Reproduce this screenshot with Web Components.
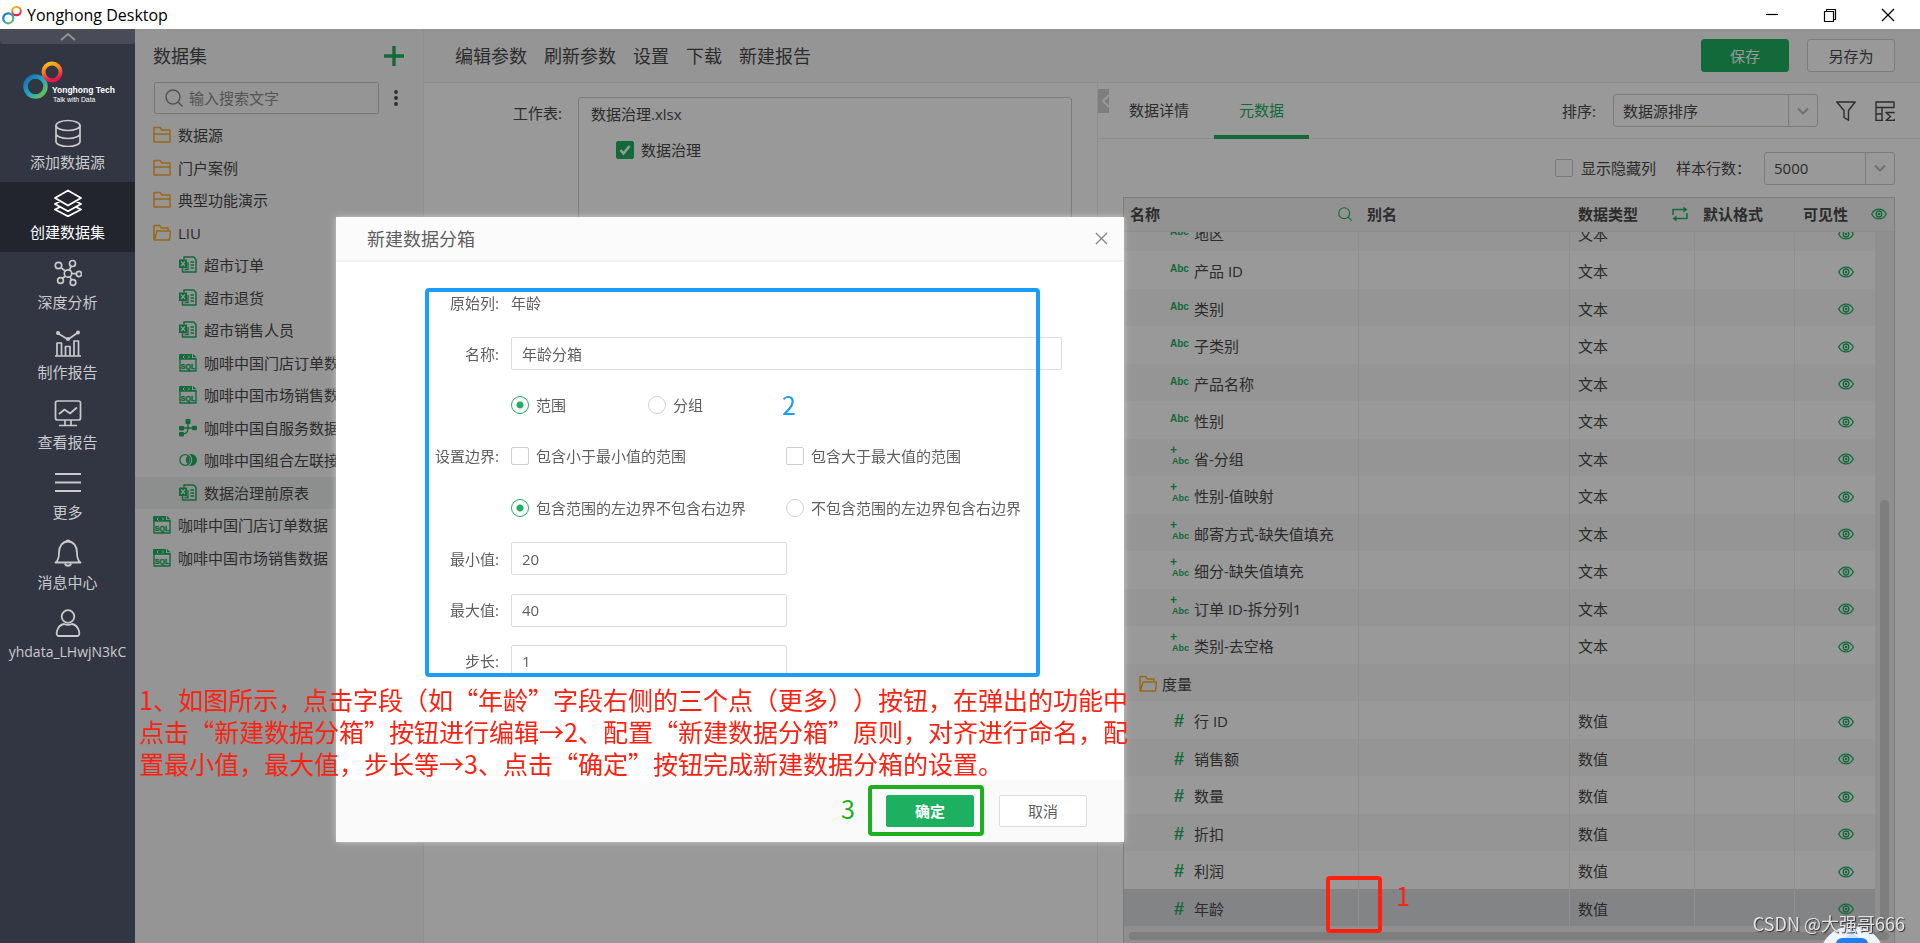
<!DOCTYPE html>
<html lang="zh-CN">
<head>
<meta charset="utf-8">
<title>Yonghong Desktop</title>
<style>
  html, body { margin: 0; height: 100%; overflow: hidden; }
  body {
    --green: #1eb061; --line: #eeeeee; --edge: #cfcfcf; --panel: #f8f8f8; --blue: #1b9cff; --red: #ff2010; --ok: #1cb01c;
    font: 15px/20px "Open Sans", "Noto Sans CJK SC", sans-serif; color: #4a4a4a;
  }
  yh-app { isolation: isolate; }
  call-box, call-num, call-text, page-mark, help-bot { position: absolute; }
  #box-form { left: 425px; top: 288px; width: 615px; height: 389px; color: var(--blue); }
  #box-ok { left: 868px; top: 785px; width: 116px; height: 51px; color: var(--ok); }
  #box-cell { left: 1326px; top: 876px; width: 56px; height: 57px; color: var(--red); }
  #num-cell { left: 1396px; top: 879px; color: var(--red); }
  #num-form { left: 782px; top: 388px; color: var(--blue); }
  #num-ok { left: 841px; top: 792px; color: var(--ok); }
  call-text { left: 139px; top: 683px; color: var(--red); }
  page-mark { right: 15px; bottom: 7px; }
  help-bot { right: 35px; bottom: 0; }
</style>
</head>
<body>
<yh-app></yh-app>
<call-box id="box-form"></call-box>
<call-box id="box-ok"></call-box>
<call-box id="box-cell"></call-box>
<call-num id="num-form">2</call-num>
<call-num id="num-ok">3</call-num>
<call-num id="num-cell">1</call-num>
<call-text>1、如图所示，点击字段（如“年龄”字段右侧的三个点（更多））按钮，在弹出的功能中<br>点击“新建数据分箱”按钮进行编辑→2、配置“新建数据分箱”原则，对齐进行命名，配<br>置最小值，最大值，步长等→3、点击“确定”按钮完成新建数据分箱的设置。</call-text>
<help-bot></help-bot>
<page-mark>CSDN @大强哥666</page-mark>

<script>
const define = (name, css, html, setup) => customElements.define(name, class extends HTMLElement {
  connectedCallback() {
    if (this.shadowRoot) return;
    const root = this.attachShadow({ mode: 'open' });
    root.innerHTML = `<style>*{box-sizing:border-box}button,input,select{font:inherit;color:inherit}${css}</style>` +
      (typeof html === 'function' ? html(this) : html);
    if (setup) setup(root, this);
  }
});

/* ---------- icons: [viewBox size, markup] ---------- */
const S = (w, body) => `<g fill="none" stroke="currentColor" stroke-width="${w}" stroke-linejoin="round">${body}</g>`;
const ICONS = {
  db: [28, S(1.7, '<ellipse cx="14" cy="6.5" rx="12" ry="5"/><path d="M2 6.5v16c0 2.8 5.4 5 12 5s12-2.2 12-5v-16M2 14.5c0 2.8 5.4 5 12 5s12-2.2 12-5"/>')],
  layers: [28, S(1.8, '<path d="M14 1.5 27 9 14 16.5 1 9zM5.5 12.5 1 15l13 7.3L27 15l-4.5-2.5M5.5 18.3 1 20.5 14 27.3l13-6.8-4.5-2.2"/>')],
  net: [28, S(1.7, '<circle cx="14" cy="14.5" r="3.7"/><circle cx="4.5" cy="6.5" r="3.2"/><circle cx="18.5" cy="4.5" r="3"/><circle cx="25" cy="15" r="2.6"/><circle cx="19" cy="23.5" r="2.8"/><circle cx="6.5" cy="21.5" r="2.9"/><path d="M11.2 12 7 8.6M15.3 11l2-3.8M17.7 14.6h4.7M15.8 17.7l1.8 3.5M11.2 16.9l-2.5 2.4"/>')],
  chart: [28, S(1.7, '<path d="M1 27h26M3 27V14h4.5v13M11.5 27V17.5H16V27M20 27V12h4.5v15M3.5 4 14 10.5 24 3.5"/>') + '<g fill="currentColor"><circle cx="4" cy="4" r="2"/><circle cx="14" cy="10" r="2"/><circle cx="24" cy="3.5" r="2"/></g>'],
  monitor: [28, S(1.7, '<rect x="1.5" y="2" width="25" height="19" rx="2"/><path d="m5 15 5.500-4.500 5.500 4 7-6M11 21v5M17 21v5M5 26.500h18"/>')],
  menu: [28, S(1.8, '<path d="M1 5h26M1 13.5h26M1 22h26"/>')],
  bell: [28, S(1.8, '<path d="M1.500 23.500c3-2 3.500-5 3.500-10C5 7 8.500 2.500 14 2.500S23 7 23 13.500c0 5 .5 8 3.500 10z"/><path d="M12 2.500c.5-1.500 3.500-1.500 4 0M11 24.500c.5 3 5.500 3 6 0"/>')],
  user: [28, S(1.8, '<circle cx="14" cy="7.5" r="6.3"/><path d="M4.500 27C1 27 2.500 16.500 10 15c2.500 1 5.500 1 8 0 7.500 1.500 9 12 5.500 12z"/>')],
  up: [16, S(1.8, '<path d="m1 11 7-6 7 6"/>')],
  left: [16, S(2, '<path d="M11 2 5 8l6 6"/>')],
  down: [12, S(2, '<path d="m1 3.5 5 5 5-5"/>')],
  close: [14, S(1.4, '<path d="m1 1 12 12M13 1 1 13"/>')],
  winmin: [14, S(1.2, '<path d="M1 6.5h12"/>')],
  winmax: [14, S(1.2, '<path d="M1.500 3.500h9v10h-9zM3.500 3.500v-2h9v10h-2"/>')],
  plus: [20, '<path fill="currentColor" d="M8.300 0h3.400v8.300H20v3.400h-8.300V20H8.300v-8.300H0V8.300h8.300z"/>'],
  dots: [16, '<g fill="currentColor"><circle cx="8" cy="2" r="1.9"/><circle cx="8" cy="8" r="1.9"/><circle cx="8" cy="14" r="1.9"/></g>'],
  search: [18, S(1.4, '<circle cx="8" cy="8" r="7"/><path d="m13 13 4.5 4.5"/>')],
  folder: [18, S(1.5, '<path d="M1 16V1.5h6L9 4h8v12zM1 8h16"/>')],
  open: [18, S(1.5, '<path d="M1 16V1.5h5.500L8.500 4H15v3M1.500 16 4 7h13.500l-1 9z"/>')],
  xls: [18, S(1.5, '<path d="M5 3.500V1h9.800L17 3.500V16H3.500v-4"/>') + '<path fill="currentColor" d="M0 3.500h8v8.500H0z"/><path d="m2 5.500 4 4.500M6 5.500 2 10" stroke="#f8f8f8" stroke-width="1.2"/><path d="M9 6v7.500H5.500M11.500 6H15M11.500 9H15M11.500 12H15" fill="none" stroke="currentColor" stroke-width="1.3"/>'],
  sql: [18, S(1.4, '<path d="M1 1v16h16V5"/>') + '<path fill="currentColor" d="M.3 0H13v4h4.700v1.800H.3z"/><path fill="currentColor" d="m14 0 3.700 3.200H14z"/><path d="M5.500 1.500 4 3l1.500 1.500M9 1.500 10.500 3 9 4.500" fill="none" stroke="#f8f8f8"/><text x="9" y="14.500" text-anchor="middle" font-family="Liberation Sans" font-weight="700" font-size="7" fill="currentColor" stroke="currentColor" stroke-width=".4">SQL</text>'],
  flow: [18, S(1.3, '<path d="M3 9h12M9 4v6c0 3-2 5-6 5"/>') + '<g fill="currentColor"><rect x="6.5" y="0" width="5" height="5" rx="1"/><rect x="0" y="7" width="5" height="4.5" rx="1"/><rect x="13" y="6.7" width="5" height="4.5" rx="1"/><rect x="0" y="13" width="5" height="4.5" rx="1"/></g>'],
  join: [18, S(1.3, '<circle cx="6.2" cy="9" r="5.4"/>') + '<path fill="currentColor" d="M12 3a6 6 0 1 1 0 12 6 6 0 0 1-1.800-.3 7 7 0 0 0 0-11.400A6 6 0 0 1 12 3z"/><path fill="currentColor" d="M8.600 4.800a6 6 0 0 0 0 8.400 5.400 5.400 0 0 0 0-8.400z"/>'],
  filter: [20, S(1.4, '<path d="M.8 1h18.400L12.500 9.500V19.200L8 16.500v-7z"/>')],
  tsum: [20, S(1.4, '<path d="M19 7V1H1v18.500h7M1 6.500h18M7 6.500v13M1 13h6M19 12.500V11.500h-8l4.500 4-4.500 4H19.500v-1.500"/>')],
  swap: [16, S(1.5, '<path d="M1 9V3.500h11M15 7v5.500H4"/>') + '<path fill="currentColor" d="M11.500.5 15.500 3.500l-4 3zM4.500 9.500l-4 3 4 3z"/>'],
  eye: [16, S(1.3, '<path d="M.7 8C4 1.500 12 1.500 15.300 8 12 14.500 4 14.500.7 8z"/><ellipse cx="8" cy="8" rx="2.8" ry="3"/><circle cx="8" cy="8" r=".6"/>')],
  check: [16, '<path d="m3.500 8 3 3.500 6-7.500" fill="none" stroke="#fff" stroke-width="2.6"/>']
};
define('yh-icon', ':host{display:inline-flex;flex:none}svg{display:block}', el => {
  const [box, body] = ICONS[el.getAttribute('name')];
  const s = el.getAttribute('size') || box;
  return `<svg width="${s}" height="${s}" viewBox="0 0 ${box} ${box}" aria-hidden="true">${body}</svg>`;
});

const rings = `<defs>
  <linearGradient id="a" x1="0" y1="0" x2="1" y2="1"><stop offset="0" stop-color="#1668b8"/><stop offset=".5" stop-color="#1fa6c4"/><stop offset="1" stop-color="#7cc242"/></linearGradient>
  <linearGradient id="b" x1="0" y1="0" x2=".3" y2="1"><stop offset="0" stop-color="#fbc614"/><stop offset=".5" stop-color="#f37a25"/><stop offset="1" stop-color="#e5174d"/></linearGradient></defs>
  <circle cx="12.5" cy="25.5" r="10" fill="none" stroke="url(#a)" stroke-width="4.5"/>
  <circle cx="29" cy="11" r="8.5" fill="none" stroke="url(#b)" stroke-width="4"/>`;

define('yh-titlebar', `
  :host{display:flex;align-items:center;height:29px;background:#fff;color:#000;font-size:16px;padding-left:2px;flex:none}
  h1{font:inherit;margin:0 auto 0 5px;line-height:24px}
  button{width:58px;height:28px;border:0;background:none;display:grid;place-items:center;padding:0}
  nav{display:flex;padding-right:3px}`, `
  <svg width="20" height="20" viewBox="0 0 40 38">${rings}</svg><h1>Yonghong Desktop</h1>
  <nav><button aria-label="最小化"><yh-icon name="winmin"></yh-icon></button><button aria-label="还原"><yh-icon name="winmax"></yh-icon></button><button aria-label="关闭"><yh-icon name="close"></yh-icon></button></nav>`);

define('nav-item', `
  :host{display:block;height:70px;color:#c9cacd}
  :host([active]){background:#22252e;color:#fff}
  :host([icon=user]){font-size:14px}
  a{display:flex;flex-direction:column;align-items:center;gap:5px;padding-top:7px;color:inherit;text-decoration:none;white-space:nowrap}`,
  el => `<a href="#"><yh-icon name="${el.getAttribute('icon')}"></yh-icon><span><slot></slot></span></a>`);

define('yh-sidenav', `
  :host{display:block;width:135px;background:#323642;flex:none}
  button{display:grid;place-items:center;width:100%;height:15px;background:#494c57;border:0;border-radius:0 0 3px 3px;color:#92949b;padding:0}
  .logo{display:block;margin:17px 0 0 23px;height:51px}
  text{font-family:"Liberation Sans";fill:#fff}`, `
  <button aria-label="收起"><yh-icon name="up"></yh-icon></button>
  <svg class="logo" width="100" height="51">${rings}
    <text x="29" y="32" font-size="8.5" font-weight="700">Yonghong Tech</text><text x="30" y="41" font-size="6.8">Talk with Data</text></svg>
  <nav>
    <nav-item icon="db">添加数据源</nav-item><nav-item icon="layers" active>创建数据集</nav-item>
    <nav-item icon="net">深度分析</nav-item><nav-item icon="chart">制作报告</nav-item>
    <nav-item icon="monitor">查看报告</nav-item><nav-item icon="menu">更多</nav-item>
    <nav-item icon="bell">消息中心</nav-item><nav-item icon="user">yhdata_LHwjN3kC</nav-item>
  </nav>`);

define('tree-item', `
  :host{display:flex;align-items:center;gap:7px;padding-left:18px;white-space:nowrap;color:#4a4a4a}
  :host([deep]){padding-left:44px}
  :host([selected]){background:#e9eeeb}
  yh-icon{color:var(--green)} yh-icon[name=folder],yh-icon[name=open]{color:#ffad2b}
  a{color:inherit;text-decoration:none}`,
  el => `<yh-icon name="${el.getAttribute('icon')}"></yh-icon><a href="#"><slot></slot></a>`);

define('yh-datasets', `
  :host{display:block;width:289px;background:var(--panel);border-right:1px solid var(--line);flex:none;overflow:hidden}
  header{display:flex;align-items:center;justify-content:space-between;height:53px;padding:0 19px 0 18px}
  h2{font:inherit;font-size:18px;line-height:24px;margin:0}
  button{border:0;background:none;padding:0;display:flex;color:inherit} header button{color:var(--green)}
  .find{display:flex;align-items:center;gap:9px;padding-left:19px}
  label{display:flex;align-items:center;gap:6px;width:225px;height:32px;border:1px solid #c6c6c6;border-radius:2px;padding-left:10px;color:#888}
  input{flex:1;min-width:0;border:0;outline:0;background:none;padding:0} input::placeholder{color:#8c8c8c;opacity:1}
  .tree{display:grid;grid-auto-rows:1fr;height:455px;margin-top:5px}`, `
  <header><h2>数据集</h2><button aria-label="新建"><yh-icon name="plus"></yh-icon></button></header>
  <div class="find"><label><yh-icon name="search"></yh-icon><input aria-label="搜索" placeholder="输入搜索文字"></label><button aria-label="更多"><yh-icon name="dots"></yh-icon></button></div>
  <div class="tree">
    <tree-item icon="folder">数据源</tree-item><tree-item icon="folder">门户案例</tree-item><tree-item icon="folder">典型功能演示</tree-item><tree-item icon="open">LIU</tree-item>
    <tree-item deep icon="xls">超市订单</tree-item><tree-item deep icon="xls">超市退货</tree-item><tree-item deep icon="xls">超市销售人员</tree-item>
    <tree-item deep icon="sql">咖啡中国门店订单数据</tree-item><tree-item deep icon="sql">咖啡中国市场销售数据</tree-item>
    <tree-item deep icon="flow">咖啡中国自服务数据集</tree-item><tree-item deep icon="join">咖啡中国组合左联接</tree-item>
    <tree-item deep icon="xls" selected>数据治理前原表</tree-item>
    <tree-item icon="sql">咖啡中国门店订单数据</tree-item><tree-item icon="sql">咖啡中国市场销售数据</tree-item>
  </div>`);

define('yh-toolbar', `
  :host{display:flex;align-items:center;height:54px;background:var(--panel);border-bottom:1px solid var(--line);padding:0 25px 0 31px;gap:17px}
  a{font-size:18px;color:inherit;text-decoration:none;white-space:nowrap}
  .acts{display:flex;gap:18px;margin-left:auto}
  button{width:88px;height:33px;border:1px solid var(--edge);border-radius:3px;background:#fff;padding:0}
  .save{background:var(--green);border-color:var(--green);color:#fff}`, `
  <a href="#">编辑参数</a><a href="#">刷新参数</a><a href="#">设置</a><a href="#">下载</a><a href="#">新建报告</a>
  <div class="acts"><button class="save">保存</button><button>另存为</button></div>`);

const checkCss = `input[type=checkbox]{appearance:none;flex:none;width:18px;height:18px;margin:0;border:1px solid var(--edge);border-radius:2px;background:#fff}`;

define('yh-sheets', `
  :host{display:flex;align-items:flex-start;gap:16px;padding:14px 25px 0 0;background:#fff}
  .name{width:138px;text-align:right;padding-top:6px}
  .box{flex:1;height:400px;border:1px solid var(--edge);border-radius:3px;padding:6px 12px}
  label{display:flex;align-items:center;gap:7px;margin:16px 0 0 25px}
  ${checkCss} .tick{display:grid} .tick>*{grid-area:1/1} .tick yh-icon{margin:1px}
  input[type=checkbox]:checked{background:var(--green);border-color:var(--green)}`, `
  <div class="name">工作表:</div><div class="box"><div>数据治理.xlsx</div>
  <label><span class="tick"><input type="checkbox" checked><yh-icon name="check"></yh-icon></span>数据治理</label></div>`);

define('yh-select', `
  :host{display:flex;border:1px solid var(--edge);border-radius:3px;background:#fff;height:33px}
  select{flex:1;min-width:0;appearance:none;border:0;background:none;padding:0 9px;outline:0}
  span{width:29px;border-left:1px solid var(--edge);display:grid;place-items:center;color:#bbb}`,
  el => `<select aria-label="${el.getAttribute('label')}"><option>${el.getAttribute('value')}</option></select><span><yh-icon name="down"></yh-icon></span>`);

define('field-table', `
  :host{display:flex;flex-direction:column;position:relative;isolation:isolate;border:1px solid var(--edge);border-bottom:0;overflow:hidden;background:#fff}
  .view{flex:1;min-height:0;overflow:hidden}
  table{width:100%;border-collapse:separate;border-spacing:0;table-layout:fixed}
  th{position:sticky;top:0;z-index:1;height:34px;background:#f4f4f4;text-align:left;padding:0 7px 2px 6px;font-weight:700;border-bottom:1px solid #ebebeb;white-space:nowrap}
  th>div{display:flex;justify-content:space-between;align-items:center}
  td{padding:2px 7px 0 8px;border-right:1px solid var(--line);white-space:nowrap}
  th+th{padding-left:8px}
  tbody tr{height:38px} tbody tr:nth-child(odd){height:37px;background:#f8f8f8} tbody tr.sel{background:#dadcdf}
  td:first-child{padding-left:46px} tr.group td:first-child{padding-left:15px}
  td:last-child{border:0;padding:0 40px 0 0;text-align:right}
  td yh-icon[name=eye]{vertical-align:middle}
  .n{display:flex;align-items:center;gap:4px} .group .n{gap:5px}
  yh-icon{color:var(--green)} yh-icon[name=open]{color:#ffad2b}
  .t{width:20px;height:20px;color:var(--green);font:700 10px/16px "Liberation Sans",sans-serif}
  .t.num{font-size:18px;line-height:20px;text-align:center;padding-right:2px}
  .t.new{font-size:9px;line-height:24px;padding-left:2px;position:relative}
  .t.new b{position:absolute;left:0;top:-6px;font-size:12px;line-height:14px}
  .vs{position:absolute;right:0;top:34px;bottom:0;width:19px;background:#eee}
  .vs i{position:absolute;right:5px;top:268px;bottom:17px;width:9px;border-radius:5px 5px 0 0;background:#d2d2d2}
  .hs{height:17px;background:#efefef;padding:6px 5px 0;z-index:1} .hs i{display:block;height:8px;border-radius:4px;background:#d2d2d2}`,
  () => {
    const text = ['地区', '产品 ID', '类别', '子类别', '产品名称', '性别', '+省-分组', '+性别-值映射', '+邮寄方式-缺失值填充', '+细分-缺失值填充', '+订单 ID-拆分列1', '+类别-去空格'];
    const nums = ['行 ID', '销售额', '数量', '折扣', '利润', '年龄'];
    const row = (mark, name, type, cls = '') => `<tr class="${cls}"><td><div class="n">${mark}<span>${name}</span></div></td><td></td><td>${type}</td><td></td><td>${type ? '<yh-icon name="eye"></yh-icon>' : ''}</td></tr>`;
    const body = text.map(t => t[0] === '+' ? row('<span class="t new"><b>+</b>Abc</span>', t.slice(1), '文本') : row('<span class="t">Abc</span>', t, '文本')).join('') +
      row('<yh-icon name="open"></yh-icon>', '度量', '', 'group') +
      nums.map(t => row('<span class="t num">#</span>', t, '数值', t === '年龄' ? 'sel' : '')).join('');
    return `<div class="view"><table><colgroup><col style="width:235px"><col><col style="width:125px"><col style="width:100px"><col style="width:99px"></colgroup>
      <thead><tr><th><div>名称<yh-icon name="search" size="14"></yh-icon></div></th><th>别名</th><th><div>数据类型<yh-icon name="swap"></yh-icon></div></th><th>默认格式</th><th><div>可见性<yh-icon name="eye"></yh-icon></div></th></tr></thead>
      <tbody>${body}</tbody></table></div><div class="vs"><i></i></div><div class="hs"><i></i></div>`;
  },
  root => { root.querySelector('.view').scrollTop = 18; });

define('yh-meta', `
  :host{display:flex;flex-direction:column;position:relative;border-left:1px solid var(--line);background:#fff;min-height:0}
  .fold{position:absolute;left:0;top:6px;width:11px;height:24px;padding:0;border:0;background:#d2d2d2;color:#fff;display:grid;place-items:center}
  .tabs{display:flex;align-items:center;height:56px;border-bottom:1px solid var(--line);padding:0 25px 0 31px;flex:none}
  .tabs a{color:inherit;text-decoration:none;line-height:54px;height:56px;border-bottom:4px solid transparent}
  .tabs a.on{color:var(--green);border-color:var(--green);width:95px;text-align:center;margin-left:25px}
  .sort{display:flex;align-items:center;margin-left:auto}
  .sort yh-select{width:205px;margin:0 18px 0 17px} .sort yh-icon+yh-icon{margin-left:19px}
  .opts{display:flex;align-items:center;justify-content:flex-end;height:58px;padding:0 25px;flex:none}
  .opts label{display:flex;align-items:center;gap:8px;margin-right:20px} .opts yh-select{width:131px;margin-left:13px}
  ${checkCss}
  field-table{flex:1;min-height:0;margin:0 25px}`, `
  <button class="fold" aria-label="收起"><yh-icon name="left"></yh-icon></button>
  <div class="tabs"><a href="#">数据详情</a><a href="#" class="on">元数据</a>
    <div class="sort"><span>排序:</span><yh-select label="排序" value="数据源排序"></yh-select><yh-icon name="filter"></yh-icon><yh-icon name="tsum"></yh-icon></div></div>
  <div class="opts"><label><input type="checkbox">显示隐藏列</label><span>样本行数：</span><yh-select label="样本行数" value="5000"></yh-select></div>
  <field-table></field-table>`);

define('bin-dialog', `
  :host{display:flex;flex-direction:column;background:#fff;box-shadow:0 0 6px rgba(255,255,255,.5);color:#5f5f5f}
  header{display:flex;align-items:center;justify-content:space-between;height:45px;background:#fbfbfb;border-bottom:2px solid #f1f1f1;padding:0 16px 0 31px;flex:none}
  h2{font:inherit;font-size:18px;margin:0;line-height:24px}
  button{padding:0;border:0;background:none;color:inherit;display:grid;place-items:center} header button{color:#888}
  .body{height:414px;overflow:hidden;padding-top:15px;flex:none}
  form{display:grid;grid-auto-rows:1fr;height:410px}
  .row{display:grid;grid-template-columns:175px 275px 276px;align-items:center;white-space:nowrap}
  .k{text-align:right;margin-right:12px}
  .text{height:33px;border:1px solid #dcdcdc;border-radius:2px;padding:0 10px;width:276px;outline:0;background:#fff}
  .text.full{grid-column:2/4;width:auto}
  .pair{display:flex;gap:82px}
  .opt{display:flex;align-items:center;gap:7px}
  .opt input{appearance:none;margin:0;width:18px;height:18px;border:1px solid #cfcfcf;border-radius:2px;flex:none}
  .opt input[type=radio]{border-radius:50%}
  .opt input[type=radio]:checked{border-color:#1eb061;background:radial-gradient(circle,#1eb061 3px,#fff 4px)}
  footer{margin-top:auto;height:62px;background:#fafafa;display:flex;align-items:center;justify-content:flex-end;gap:25px;padding-right:37px;flex:none}
  footer button{width:88px;height:32px;border:1px solid #dcdcdc;border-radius:2px;background:#fff}
  footer .ok{background:#1eb061;border-color:#1eb061;color:#fff;font-weight:700}`, `
  <header><h2>新建数据分箱</h2><button aria-label="关闭"><yh-icon name="close" size="13"></yh-icon></button></header>
  <div class="body"><form>
    <div class="row"><span class="k">原始列:</span><span>年龄</span></div>
    <div class="row"><label class="k" for="n">名称:</label><input id="n" class="text full" value="年龄分箱"></div>
    <div class="row"><span class="k"></span><div class="pair"><label class="opt"><input type="radio" name="m" checked>范围</label><label class="opt"><input type="radio" name="m">分组</label></div></div>
    <div class="row"><span class="k">设置边界:</span><label class="opt"><input type="checkbox">包含小于最小值的范围</label><label class="opt"><input type="checkbox">包含大于最大值的范围</label></div>
    <div class="row"><span class="k"></span><label class="opt"><input type="radio" name="e" checked>包含范围的左边界不包含右边界</label><label class="opt"><input type="radio" name="e">不包含范围的左边界包含右边界</label></div>
    <div class="row"><label class="k" for="lo">最小值:</label><input id="lo" class="text" value="20"></div>
    <div class="row"><label class="k" for="hi">最大值:</label><input id="hi" class="text" value="40"></div>
    <div class="row"><label class="k" for="st">步长:</label><input id="st" class="text" value="1"></div>
  </form></div>
  <footer><button class="ok">确定</button><button>取消</button></footer>`);

define('yh-app', `
  :host{display:flex;flex-direction:column;height:100vh}
  .shell{flex:1;display:flex;min-height:0}
  .work{flex:1;display:flex;min-width:0;position:relative}
  main{flex:1;min-width:0;display:flex;flex-direction:column}
  .split{flex:1;min-height:0;display:grid;grid-template-columns:minmax(0,1fr) 823px}
  .mask{position:absolute;inset:0;background:rgba(0,0,0,.4)}
  bin-dialog{position:absolute;left:201px;top:188px;width:788px;height:625px}`, `
  <yh-titlebar></yh-titlebar>
  <div class="shell"><yh-sidenav></yh-sidenav>
    <div class="work"><yh-datasets></yh-datasets>
      <main><yh-toolbar></yh-toolbar><div class="split"><yh-sheets></yh-sheets><yh-meta></yh-meta></div></main>
      <div class="mask"></div><bin-dialog></bin-dialog></div></div>`);

define('call-box', ':host{border:4px solid currentColor;border-radius:4px;box-sizing:border-box;pointer-events:none}', '');
define('call-num', ':host{font:25px/32px "Noto Sans CJK SC",sans-serif}', '<slot></slot>');
define('call-text', ':host{font:25px/32px "Noto Sans CJK SC",sans-serif;white-space:nowrap;text-spacing-trim:space-all}', '<slot></slot>');
define('page-mark', ':host{font:18px/26px "Noto Sans CJK SC",sans-serif;color:#e2e2e2;text-shadow:1px 1px 1px #333;white-space:nowrap}', '<slot></slot>');
define('help-bot', ':host{display:block;width:66px;height:17px}svg{display:block}', `
  <svg width="66" height="17"><circle cx="33" cy="33" r="33" fill="#edf5ff"/><path d="M32.500 6h2v7h-2z" fill="#9cc8ff"/><path d="m25 12 8-5 8 5z" fill="#cfe4ff"/><circle cx="33" cy="4.5" r="2" fill="#1e7ff0"/><path d="M17 17c1-4 4-5 8-5h16c4 0 7 1 8 5z" fill="#1e7ff0"/></svg>`);
</script>
</body>
</html>
